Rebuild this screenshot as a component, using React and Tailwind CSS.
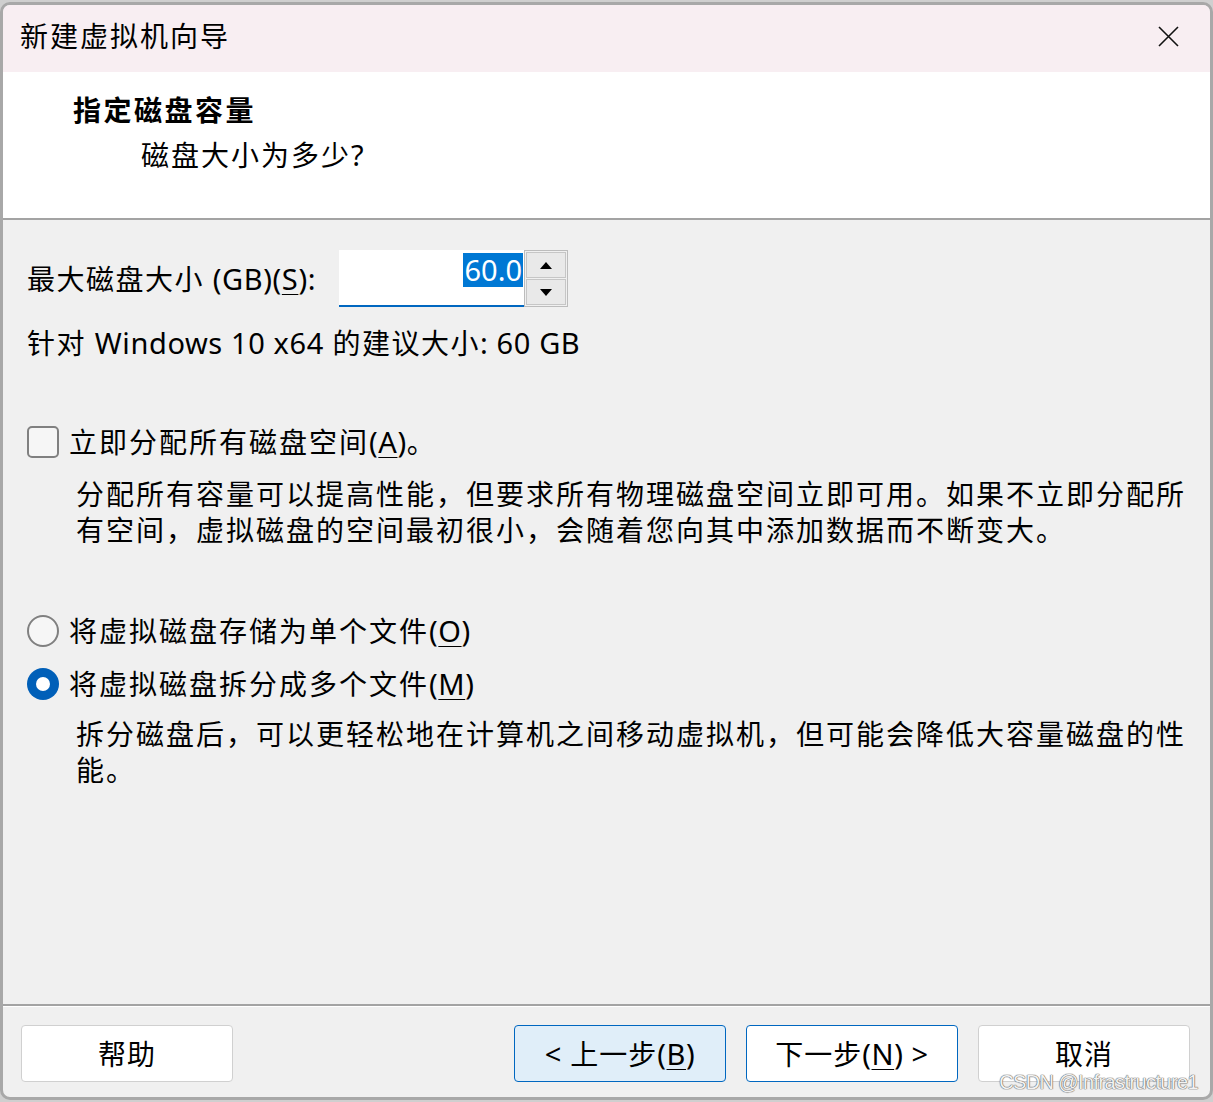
import React from 'react';

const FONT = { fontFamily: '"Noto Sans", "Noto Sans CJK SC", sans-serif' };

const Key = ({ children }) => <span className="underline underline-offset-4 decoration-1">{children}</span>;
const Lat = ({ children }) => <span className="tracking-[0.6px] text-[29px]">{children}</span>;

const WizardButton = ({ children, variant = 'plain' }) => {
  const styles = {
    plain: 'bg-white border-[#d0d0d0]',
    back: 'bg-[#e0eef9] border-[#0067c0]',
    next: 'bg-white border-[#0067c0]',
  };
  return (
    <button className={`w-[212px] h-[57px] rounded-[4px] border flex items-center justify-center text-[28px] tracking-[1px] text-black ${styles[variant]}`}>
      {children}
    </button>
  );
};

const Radio = ({ checked }) =>
  checked ? (
    <div className="w-[32px] h-[32px] rounded-full bg-[#005fb8] flex items-center justify-center shrink-0">
      <div className="w-[14px] h-[14px] rounded-full bg-white" />
    </div>
  ) : (
    <div className="w-[32px] h-[32px] rounded-full border-2 border-[#808080] bg-[#f6f6f6] shrink-0" />
  );

export default function App() {
  return (
    <div className="w-[1213px] h-[1102px] bg-[#cfcfcf] pt-[2px] relative" style={FONT}>
      <div className="h-[1098px] border-[3px] border-[#a8a8a8] rounded-[10px] overflow-hidden flex flex-col bg-[#f0f0f0]">
        {/* title bar */}
        <div className="h-[67px] bg-[#f8eef2] flex items-center justify-between pl-[17px] pr-[31px] pb-[5px] shrink-0">
          <span className="text-[28px] tracking-[2px] text-black">新建虚拟机向导</span>
          <svg width="21" height="21" viewBox="0 0 21 21">
            <path d="M1 1 L20 20 M20 1 L1 20" stroke="#111" strokeWidth="1.6" />
          </svg>
        </div>

        {/* header */}
        <div className="h-[148px] bg-white border-b-2 border-[#a3a3a3] shrink-0 pt-[18px]">
          <div className="pl-[70px] text-[28px] tracking-[2.5px] font-bold text-black leading-[40px]">指定磁盘容量</div>
          <div className="pl-[138px] mt-[5px] text-[28px] tracking-[2px] text-black leading-[40px]">
            磁盘大小为多少<Lat>?</Lat>
          </div>
        </div>

        {/* body */}
        <div className="flex-1 pl-[24px] pr-[20px] text-[28px] text-black">
          <div className="flex items-center mt-[30px] h-[57px]">
            <span className="tracking-[1.5px] w-[312px]">
              最大磁盘大小 <Lat>(GB)(<Key>S</Key>):</Lat>
            </span>
            <div className="w-[185px] h-[57px] bg-white border-b-2 border-[#0067c0] flex items-start justify-end pt-[3px] pr-[1px]">
              <span className="bg-[#0078d4] text-white leading-[34px] px-[1px] text-[29px]">60.0</span>
            </div>
            <div className="w-[44px] h-[57px] border border-[#bcbcbc] p-[1px] flex flex-col gap-[1px]">
              <div className="flex-1 bg-[#e9e9e9] border border-[#c6c6c6] flex items-center justify-center">
                <svg width="12" height="7" viewBox="0 0 12 7"><path d="M6 0 L12 7 L0 7 Z" fill="#000" /></svg>
              </div>
              <div className="flex-1 bg-[#e9e9e9] border border-[#c6c6c6] flex items-center justify-center">
                <svg width="12" height="7" viewBox="0 0 12 7"><path d="M0 0 L12 0 L6 7 Z" fill="#000" /></svg>
              </div>
            </div>
          </div>

          <div className="mt-[16px] leading-[40px] tracking-[1.5px]">
            针对 <Lat>Windows 10 x64</Lat> 的建议大小<Lat>: 60 GB</Lat>
          </div>

          <div className="flex items-center mt-[59px] h-[40px]">
            <div className="w-[32px] h-[32px] rounded-[5px] border-2 border-[#808080] bg-[#f6f6f6] shrink-0" />
            <span className="ml-[10px] tracking-[2px]">
              立即分配所有磁盘空间<Lat>(<Key>A</Key>)</Lat>。
            </span>
          </div>
          <div className="pl-[49px] mt-[14px] leading-[36px] tracking-[2px] whitespace-nowrap">
            <div>分配所有容量可以提高性能，但要求所有物理磁盘空间立即可用。如果不立即分配所</div>
            <div>有空间，虚拟磁盘的空间最初很小，会随着您向其中添加数据而不断变大。</div>
          </div>

          <div className="flex items-center mt-[63px] h-[40px]">
            <Radio />
            <span className="ml-[10px] tracking-[2px]">
              将虚拟磁盘存储为单个文件<Lat>(<Key>O</Key>)</Lat>
            </span>
          </div>
          <div className="flex items-center mt-[13px] h-[40px]">
            <Radio checked />
            <span className="ml-[10px] tracking-[2px]">
              将虚拟磁盘拆分成多个文件<Lat>(<Key>M</Key>)</Lat>
            </span>
          </div>
          <div className="pl-[49px] mt-[12px] leading-[36px] tracking-[2px] whitespace-nowrap">
            <div>拆分磁盘后，可以更轻松地在计算机之间移动虚拟机，但可能会降低大容量磁盘的性</div>
            <div>能。</div>
          </div>
        </div>

        {/* footer */}
        <div className="h-[93px] shrink-0 border-t-2 border-[#a3a3a3] shadow-[inset_0_1px_0_#ffffff] flex items-start pt-[19px] pl-[18px] pr-[20px]">
          <WizardButton>帮助</WizardButton>
          <div className="flex-1" />
          <div className="flex gap-[20px]">
            <WizardButton variant="back">
              <Lat>&lt;</Lat>&nbsp;上一步<Lat>(<Key>B</Key>)</Lat>
            </WizardButton>
            <WizardButton variant="next">
              下一步<Lat>(<Key>N</Key>) &gt;</Lat>
            </WizardButton>
            <WizardButton>取消</WizardButton>
          </div>
        </div>
      </div>

      <div
        className="absolute right-[15px] bottom-[5px] text-[20px] tracking-[-0.6px] text-[#f2f2f2] [text-shadow:0_0_1px_#666,0_0_1px_#666,0_0_1px_#666]"
        style={{ fontFamily: '"Liberation Sans", sans-serif' }}
      >
        CSDN @Infrastructure1
      </div>
    </div>
  );
}
